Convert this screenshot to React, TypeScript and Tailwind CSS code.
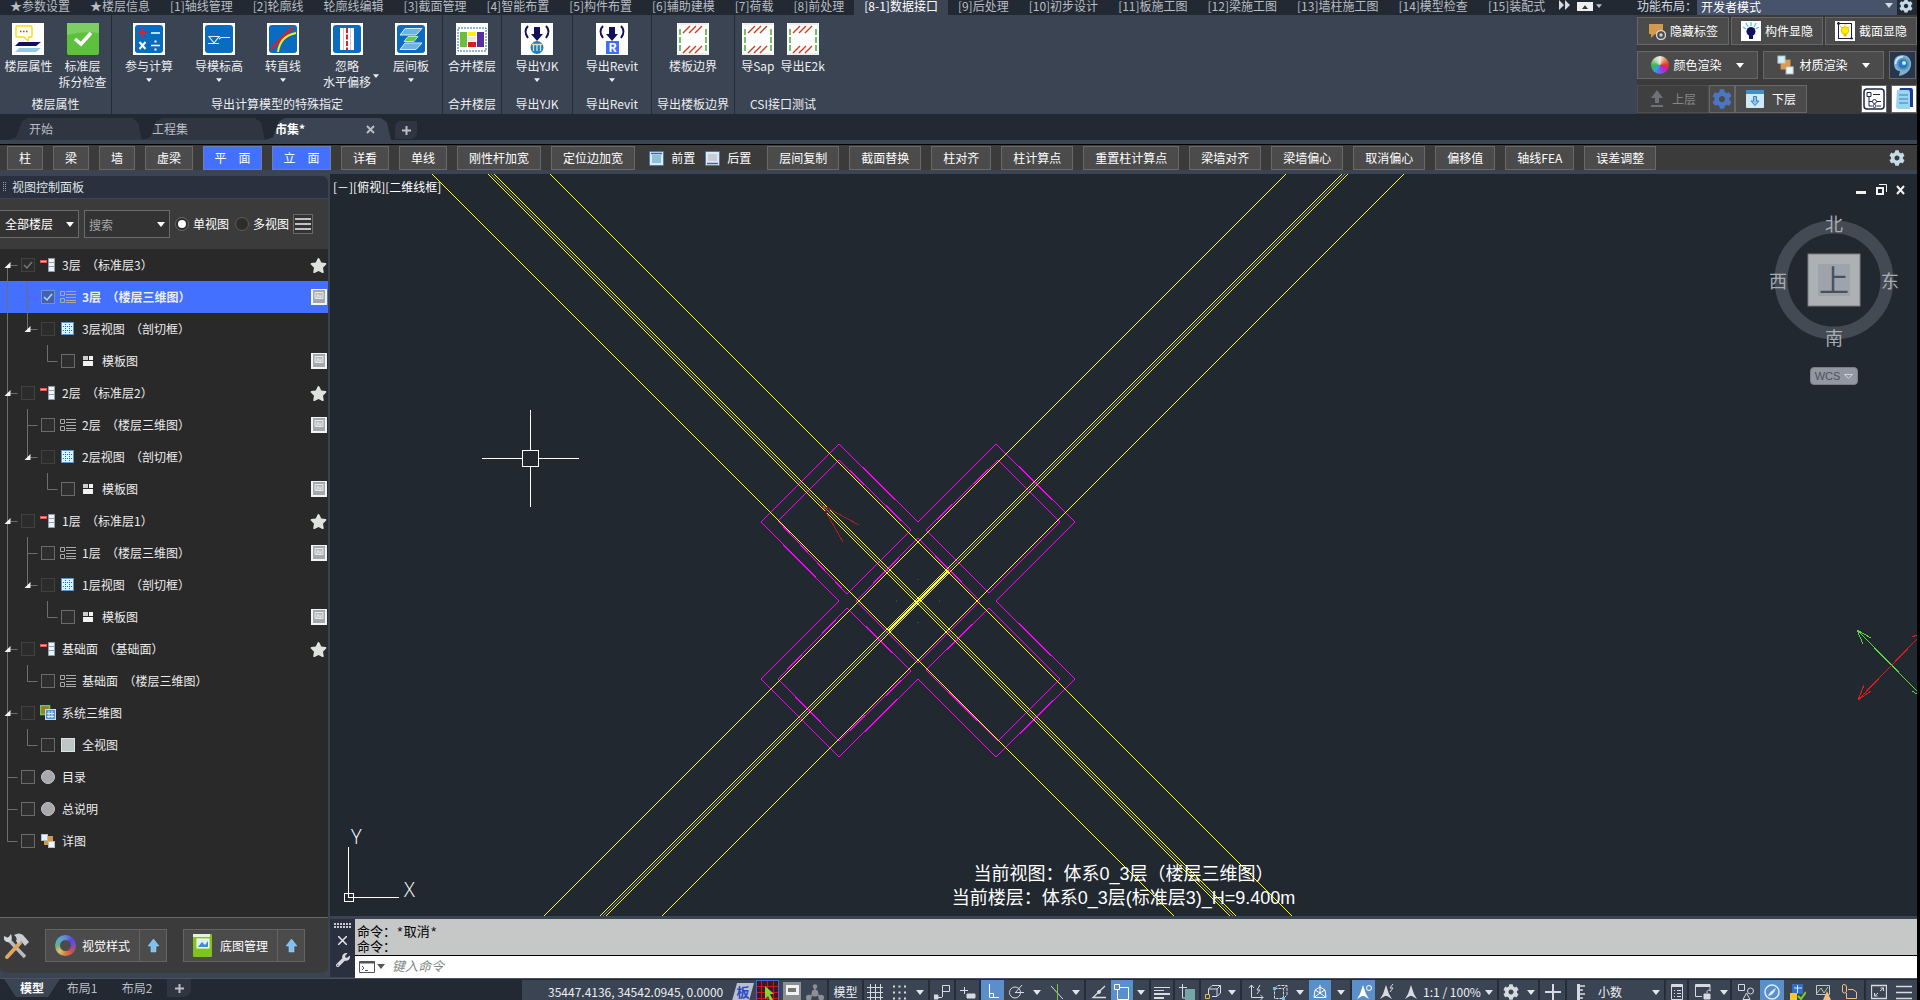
import React from 'react';
import { FaCog, FaStar, FaWrench } from 'react-icons/fa';
import clsx from 'clsx';

/* ---------- data ---------- */

const MENUS = [
  '★参数设置', '★楼层信息', '[1]轴线管理', '[2]轮廓线', '轮廓线编辑', '[3]截面管理', '[4]智能布置',
  '[5]构件布置', '[6]辅助建模', '[7]荷载', '[8]前处理', '[8-1]数据接口', '[9]后处理', '[10]初步设计',
  '[11]板施工图', '[12]梁施工图', '[13]墙柱施工图', '[14]模型检查', '[15]装配式',
];

const TOOLS_LEFT = ['柱', '梁', '墙', '虚梁', '平 面', '立 面', '详看', '单线', '刚性杆加宽', '定位边加宽'];
const TOOLS_RIGHT = [
  '层间复制', '截面替换', '柱对齐', '柱计算点', '重置柱计算点', '梁墙对齐', '梁墙偏心', '取消偏心',
  '偏移值', '轴线FEA', '误差调整',
];

type TreeIcon = 'floor' | 'list' | 'grid' | 'plan' | 'system' | 'square' | 'ball' | 'detail';
type Row = {
  level: 0 | 1 | 2;
  text: string;
  icon: TreeIcon;
  open?: boolean;
  dim?: boolean;
  checked?: boolean;
  selected?: boolean;
  last?: boolean;
  side?: 'star' | 'page';
};

const floorRows = (n: number, current = false): Row[] => [
  { level: 0, text: `${n}层  （标准层${n}）`, icon: 'floor', open: true, dim: true, checked: current, side: 'star' },
  { level: 1, text: `${n}层  （楼层三维图）`, icon: 'list', checked: current, selected: current, side: 'page' },
  { level: 1, text: `${n}层视图  （剖切框）`, icon: 'grid', open: true, dim: true, last: true },
  { level: 2, text: '模板图', icon: 'plan', last: true, side: 'page' },
];

const ROWS: Row[] = [
  ...floorRows(3, true),
  ...floorRows(2),
  ...floorRows(1),
  { level: 0, text: '基础面  （基础面）', icon: 'floor', open: true, dim: true, side: 'star' },
  { level: 1, text: '基础面  （楼层三维图）', icon: 'list', last: true },
  { level: 0, text: '系统三维图', icon: 'system', open: true, dim: true },
  { level: 1, text: '全视图', icon: 'square', last: true },
  { level: 0, text: '目录', icon: 'ball' },
  { level: 0, text: '总说明', icon: 'ball' },
  { level: 0, text: '详图', icon: 'detail', last: true },
];

/* ---------- small pieces ---------- */

const Caret = ({ className = '', small = false }: { className?: string; small?: boolean }) => (
  <svg viewBox="0 0 8 5" className={clsx('shrink-0 fill-current', small ? 'w-[6px] h-1' : 'w-2 h-[5px]', className)}>
    <path d="M0 0H8L4 5Z" />
  </svg>
);

const Icon16 = ({ children, size = 16 }: { children: React.ReactNode; size?: number }) => (
  <svg width={size} height={size} viewBox="0 0 16 16" fill="none" stroke="#d7dae0" className="shrink-0">
    {children}
  </svg>
);

/* ---------- ribbon icons, all 32 x 32 ---------- */

const R = ({ children }: { children: React.ReactNode }) => (
  <svg width="32" height="32" viewBox="0 0 32 32" fill="none" className="shrink-0">
    {children}
  </svg>
);

const BlueTile = ({ children }: { children: React.ReactNode }) => (
  <R>
    <rect width="32" height="32" fill="#fff" />
    <rect x="2" y="2" width="28" height="28" rx="3" fill="#0a6cc0" />
    {children}
  </R>
);

const IconFloorProp = () => (
  <R>
    <rect width="32" height="32" fill="#fff" />
    <path d="M4 3H19Q20 3 20 4V13Q20 14 19 14H17L16 18L12 14H5Q4 14 4 13V4Q4 3 5 3Z" stroke="#f5dd18" strokeWidth="1.4" fill="#fffef2" />
    <path d="M8 8.500H9.500M11 8.500H12.500M14 8.500H15.500" stroke="#a0522d" strokeWidth="1.6" />
    <path d="M7 19H29L24 23H3Z" fill="#10105c" />
    <path d="M7 25H29L24 29H3Z" fill="#8fcbe6" />
  </R>
);

const IconCheck = () => (
  <R>
    <rect width="32" height="32" rx="2" fill="#5dc13c" />
    <path d="M0 0H32V10Q16 8 0 12Z" fill="#7dcf61" />
    <path d="M8 16L14 21L24 10" stroke="#fff" strokeWidth="3.500" />
  </R>
);

const IconCalc = () => (
  <BlueTile>
    <path d="M5 10H14M9.500 5V14" stroke="#d8232a" strokeWidth="2" />
    <path d="M18 10H27M18 22.500H27" stroke="#fff" strokeWidth="1.600" />
    <path d="M6.500 19L12.500 26M12.500 19L6.500 26" stroke="#fff" strokeWidth="2" />
    <path d="M21.500 18.500H23.500M21.500 26.500H23.500" stroke="#fff" strokeWidth="2" />
  </BlueTile>
);

const IconLevel = () => (
  <BlueTile>
    <path d="M6 13.500H16L11 20Z M5 20.500H16 M16 16L18 14.500H27" stroke="#d5ecfb" strokeWidth="1.200" />
  </BlueTile>
);

const IconStraight = () => (
  <BlueTile>
    <path d="M4 26L26 4" stroke="#d8232a" strokeWidth="2.500" />
    <path d="M11 29Q13 13 29 10" stroke="#f4ee16" strokeWidth="2" />
  </BlueTile>
);

const IconIgnore = () => (
  <BlueTile>
    <rect x="9" y="5" width="14" height="22" fill="#fff" />
    <path d="M12.500 5V27M19.500 5V27" stroke="#c9c9c9" />
    <path d="M16 5V27" stroke="#d8232a" strokeWidth="2" strokeDasharray="5 1.500" />
  </BlueTile>
);

const IconInter = () => (
  <BlueTile>
    <path d="M10 5.500H27L21 12H5Z M10 20H27L21 26.500H5Z" fill="#6fb3e2" stroke="#d5ecfb" />
    <path d="M13 13.500H23L19 18.500H9Z" fill="#66c94a" stroke="#bfe7ad" />
  </BlueTile>
);

const IconMerge = () => (
  <R>
    <rect width="32" height="32" fill="#fff" />
    <rect x="2" y="5" width="28" height="23" stroke="#1d6fb8" strokeDasharray="2 1" />
    <rect x="4" y="9" width="7" height="15" fill="#6cbf3c" />
    <rect x="12" y="9" width="8" height="4" fill="#fff100" />
    <rect x="12" y="14" width="8" height="4" fill="#f1e7e2" />
    <rect x="12" y="19" width="8" height="5" fill="#d5201c" />
    <rect x="21" y="9" width="7" height="15" fill="#582f9f" />
  </R>
);

const ExportBase = () => (
  <>
    <rect width="32" height="32" fill="#fff" />
    <path d="M7 3Q2 8 7 15M25 3Q30 8 25 15" stroke="#10105c" strokeWidth="2" />
    <path d="M13 4H19V11H22L16 18L10 11H13Z" fill="#10105c" />
  </>
);

const IconYjk = () => (
  <R>
    <ExportBase />
    <circle cx="16" cy="24.500" r="6.500" fill="#1b7fc4" />
    <path d="M11 21.500H21M12.500 22V28M16 22V28M19.500 22V28" stroke="#e8dfae" strokeWidth="1.300" />
  </R>
);

const IconRevit = () => (
  <R>
    <ExportBase />
    <rect x="10" y="18" width="13" height="13" fill="#3f6dff" />
    <text x="16.500" y="29" textAnchor="middle" fill="#fff" className="text-[12px] font-bold">R</text>
  </R>
);

const IconSlab = () => (
  <R>
    <rect width="32" height="32" fill="#fff" />
    <path d="M1 1H31M1 31H31" stroke="#dcdcdc" />
    <path d="M6 10L13 3M12 10L19 3M18 10L25 3M6 30L13 23M12 30L19 23M18 30L25 23" stroke="#cc3a1c" strokeWidth="1.400" />
    <path d="M3 6V28M29 6V28" stroke="#55bb45" strokeWidth="1.700" strokeDasharray="6 2" />
  </R>
);

/* ---------- ribbon ---------- */

type RibbonItem = { lines: string[]; icon: React.ReactNode; drop?: boolean };
type RibbonGroup = { title: string; width: string; item: string; items: RibbonItem[] };

const GROUPS: RibbonGroup[] = [
  {
    title: '楼层属性', width: 'w-[112px]', item: 'px-[3px]',
    items: [
      { lines: ['楼层属性'], icon: <IconFloorProp /> },
      { lines: ['标准层', '拆分检查'], icon: <IconCheck /> },
    ],
  },
  {
    title: '导出计算模型的特殊指定', width: 'w-[331px]', item: 'px-[11px]',
    items: [
      { lines: ['参与计算'], icon: <IconCalc />, drop: true },
      { lines: ['导模标高'], icon: <IconLevel />, drop: true },
      { lines: ['转直线'], icon: <IconStraight />, drop: true },
      { lines: ['忽略', '水平偏移'], icon: <IconIgnore />, drop: true },
      { lines: ['层间板'], icon: <IconInter />, drop: true },
    ],
  },
  { title: '合并楼层', width: 'w-[59px]', item: 'px-1', items: [{ lines: ['合并楼层'], icon: <IconMerge /> }] },
  { title: '导出YJK', width: 'w-[71px]', item: 'px-1', items: [{ lines: ['导出YJK'], icon: <IconYjk />, drop: true }] },
  { title: '导出Revit', width: 'w-[79px]', item: 'px-1', items: [{ lines: ['导出Revit'], icon: <IconRevit />, drop: true }] },
  { title: '导出楼板边界', width: 'w-[83px]', item: 'px-1', items: [{ lines: ['楼板边界'], icon: <IconSlab /> }] },
  {
    title: 'CSI接口测试', width: 'w-[96px]', item: 'px-[3px]',
    items: [
      { lines: ['导Sap'], icon: <IconSlab /> },
      { lines: ['导出E2k'], icon: <IconSlab /> },
    ],
  },
];

const RibbonButton = ({ item, pad }: { item: RibbonItem; pad: string }) => (
  <button className={clsx('relative flex flex-col items-center shrink-0 h-[72px]', pad)}>
    {item.icon}
    <span className="mt-[3px] leading-4 whitespace-nowrap">{item.lines[0]}</span>
    {item.lines[1] && <span className="leading-4 whitespace-nowrap">{item.lines[1]}</span>}
    {item.drop && !item.lines[1] && <Caret small className="mt-1" />}
    {item.drop && item.lines[1] && <Caret small className="absolute right-[3px] top-[51px]" />}
  </button>
);

const Ribbon = () => (
  <div className="flex h-[99px] bg-[#3b4453] text-[#eceef1] overflow-hidden">
    {GROUPS.map((g, i) => (
      <section
        key={g.title}
        className={clsx('flex flex-col items-center shrink-0 pt-2', g.width, i < GROUPS.length - 1 && 'border-r border-[#252c36]')}
      >
        <div className="flex">
          {g.items.map(it => <RibbonButton key={it.lines[0]} item={it} pad={g.item} />)}
        </div>
        <h2 className="leading-4 mt-px whitespace-nowrap">{g.title}</h2>
      </section>
    ))}
    <div className="flex-1" />
    <SidePanel />
  </div>
);

const sideBtn = 'flex items-center justify-center gap-1 h-7 border border-[#676767] bg-[#4b4b4b] text-white whitespace-nowrap';

const SidePanel = () => (
  <div className="w-[280px] shrink-0 bg-[#3b3b3b] pt-[2px] flex flex-col gap-[6px]">
    <div className="flex gap-[2px]">
      <button className={clsx(sideBtn, 'flex-1')}>
        <svg width="18" height="18" viewBox="0 0 18 18" fill="none">
          <path d="M1 2H15V12H7L3 16V12H1Z" fill="#d29a4a" />
          <circle cx="13" cy="13" r="4.500" fill="#4b4b4b" stroke="#cfd3d8" strokeWidth="1.400" />
          <circle cx="13" cy="13" r="1.700" fill="#cfd3d8" />
        </svg>
        隐藏标签
      </button>
      <button className={clsx(sideBtn, 'flex-1')}>
        <svg width="20" height="20" viewBox="0 0 20 20">
          <rect width="20" height="20" fill="#fff" />
          <path d="M10 1V5M5 2L7 6M15 2L13 6M2 6L5 8M18 6L15 8" stroke="#5fc6ea" strokeWidth="1.300" />
          <circle cx="10" cy="10.500" r="4.500" fill="#10105c" />
          <rect x="8" y="14" width="4" height="4" fill="#10105c" />
        </svg>
        构件显隐
      </button>
      <button className={clsx(sideBtn, 'flex-1')}>
        <svg width="20" height="20" viewBox="0 0 20 20" fill="none">
          <rect width="20" height="20" fill="#fff" />
          <rect x="3.500" y="2.500" width="13" height="15" stroke="#1c1c4e" />
          <path d="M2 2.500H5M3.500 1V4M15 17.500H18" stroke="#1c1c4e" strokeWidth="1.500" />
          <path d="M5 5L7 7M15 5L13 7M10 3V5" stroke="#f0c419" />
          <circle cx="10" cy="9.500" r="3.700" fill="#fff100" stroke="#e9b90d" />
          <rect x="8.500" y="13" width="3" height="2.500" fill="#e9b90d" />
        </svg>
        截面显隐
      </button>
    </div>
    <div className="flex gap-[5px] pr-px">
      <button className={clsx(sideBtn, 'flex-1')}>
        <span className="size-[18px] rounded-full bg-[conic-gradient(#f4efe6,#e48a60,#e23232,#c71fc7,#7657ee,#2ca8d8,#3cb64c,#b7d8b0,#f4efe6)]" />
        <span>颜色渲染</span>
        <Caret className="ml-[10px]" />
      </button>
      <button className={clsx(sideBtn, 'flex-1')}>
        <svg width="18" height="22" viewBox="0 0 20 22">
          <rect x="4" y="5" width="11" height="11" fill="#dc9a4f" />
          <rect x="1" y="1" width="8" height="8" fill="#d9ecf2" stroke="#9cc3d0" />
          <rect x="10" y="13" width="8" height="8" fill="#eef5f8" stroke="#a5b7be" />
        </svg>
        <span>材质渲染</span>
        <Caret className="ml-[10px]" />
      </button>
      <button aria-label="渲染头像" className="flex items-center justify-center w-[27px] h-7 border border-[#676767] bg-[#26364d]">
        <svg width="23" height="24" viewBox="0 0 23 24" fill="none">
          <path d="M3 12Q2 2 12 2Q21 3 20 13Q18 21 8 23L9 18Q4 18 3 12Z" fill="#86aec8" />
          <path d="M5 11Q5 4 12 4" stroke="#d4e8f4" strokeWidth="2" />
          <circle cx="12" cy="11" r="5.500" fill="#2a78b4" stroke="#4f9cd0" strokeWidth="2" />
          <circle cx="13" cy="10" r="2" fill="#c9eafa" />
        </svg>
      </button>
    </div>
    <div className="flex">
      <button disabled className="flex items-center justify-center gap-2 w-[72px] h-7 border border-[#4e4e4e] bg-[#3f3f3f] text-[#858585]">
        <svg width="14" height="18" viewBox="0 0 14 18" fill="#6d727a">
          <path d="M7 0L13 8H9V13H5V8H1ZM1 15H13V17H1Z" />
        </svg>
        上层
      </button>
      <button aria-label="楼层设置" className="flex items-center justify-center w-[26px] h-7 border border-[#676767] bg-[#4b4b4b]">
        <FaCog className="size-5 text-[#4b77c2]" />
      </button>
      <button className={clsx(sideBtn, 'w-[72px] gap-2')}>
        <svg width="18" height="18" viewBox="0 0 18 18">
          <rect width="18" height="18" rx="1" fill="#cfe9f7" />
          <rect width="18" height="4" fill="#3e8fca" />
          <path d="M7.500 6.500H10.500V11H13L9 15.500L5 11H7.500Z" fill="#8cc4ea" stroke="#3a7fc0" />
        </svg>
        下层
      </button>
      <div className="flex-1" />
      <button aria-label="结构树" className="w-[26px] h-7 flex items-center justify-center bg-white border border-[#676767]">
        <svg width="24" height="24" viewBox="0 0 24 24" fill="none" stroke="#20264f">
          <rect x="2" y="2" width="20" height="20" rx="3" strokeWidth="1.500" />
          <path d="M5 5.500H9V9.500H5ZM7 10V19H10M7 14.500H10M11 7.500H18M15 14.500H19M15 19H19" />
          <circle cx="12.500" cy="14.500" r="2" />
          <circle cx="12.500" cy="19" r="1.500" />
        </svg>
      </button>
      <button aria-label="文档" className="w-[26px] h-7 ml-1 flex items-center justify-center bg-white border border-[#676767]">
        <svg width="22" height="24" viewBox="0 0 22 24">
          <path d="M7 1H18Q20 1 20 4V20H16V4H6Z" fill="#1b3d92" />
          <path d="M4 3H15Q17 3 17 6V22H6Q3 22 3 19Z" fill="#9bd4ef" />
          <path d="M6 8H15M6 12H15M6 16H15" stroke="#3d7fc0" />
        </svg>
      </button>
    </div>
  </div>
);

/* ---------- top bars ---------- */

const MenuBar = () => (
  <nav className="flex h-[15px] bg-[#222932] text-[#b9bdc4]">
    {MENUS.map(m => (
      <a
        key={m}
        href="#"
        className={clsx(
          'h-[15px] px-[10px] leading-3 whitespace-nowrap shrink-0',
          m.startsWith('[8-1]') && 'bg-[#3b4453] text-white',
        )}
      >
        {m}
      </a>
    ))}
    <svg width="12" height="10" viewBox="0 0 12 10" className="fill-[#d7dae0] ml-1 shrink-0">
      <path d="M0 0L5 5L0 10ZM6 0L11 5L6 10Z" />
    </svg>
    <span className="flex items-center justify-center w-4 h-[9px] mt-[2px] ml-[6px] bg-[#f0f0f0] text-[#333]">
      <Caret small className="rotate-180" />
    </span>
    <Caret small className="mt-1 ml-[3px]" />
    <div className="flex-1" />
    <label htmlFor="layout" className="leading-3 text-[#d7dae0] shrink-0">功能布局：</label>
    <div className="grid w-[200px] shrink-0 items-center">
      <select id="layout" className="col-start-1 row-start-1 appearance-none h-[15px] bg-[#47536a] text-white leading-[13px] pl-1 pb-[2px]">
        <option>开发者模式</option>
      </select>
      <Caret className="col-start-1 row-start-1 justify-self-end mr-1 mb-1 text-[#d7dae0]" />
    </div>
    <FaCog className="size-[14px] ml-[2px] mr-1 -mt-px text-[#c3d9e8] shrink-0" />
  </nav>
);

const tabShape = '[clip-path:polygon(0_100%,8px_88%,14px_15%,20px_0,calc(100%-10px)_0,calc(100%-4px)_20%,100%_100%)]';

const FileTabs = () => (
  <div className="flex items-end h-[26px] bg-[#222932] pl-2 text-[#b9bdc4]">
    <button className={clsx('w-[134px] h-[22px] pl-[21px] text-left bg-[#2f3642]', tabShape)}>开始</button>
    <button className={clsx('w-[123px] h-[22px] pl-[10px] text-left bg-[#2f3642]', tabShape)}>工程集</button>
    <button className={clsx('flex items-center w-[126px] h-[22px] pl-[10px] pr-4 bg-[#3b4453] text-white font-bold', tabShape)}>
      市集*
      <svg width="9" height="9" viewBox="0 0 9 9" stroke="#b9bdc4" strokeWidth="2" className="ml-auto">
        <path d="M1 1L8 8M8 1L1 8" />
      </svg>
    </button>
    <button aria-label="新建" className="flex items-center justify-center w-[22px] h-[18px] ml-1 mb-px rounded-tl-md rounded-br-md bg-[#2f3642]">
      <svg width="9" height="9" viewBox="0 0 9 9" stroke="#b9bdc4" strokeWidth="2">
        <path d="M4.500 0V9M0 4.500H9" />
      </svg>
    </button>
  </div>
);

const ToolButton = ({ label }: { label: string }) => (
  <button
    className={clsx(
      'h-6 border whitespace-pre text-white shrink-0',
      label.includes(' ') ? 'bg-[#4470ff] border-[#6f7fae] w-[59px]' : 'px-[11px] bg-[#4b4b4b] border-[#696969]',
    )}
  >
    {label.replace(' ', '\u3000')}
  </button>
);

const OrderIcon = ({ back = false }: { back?: boolean }) => (
  <svg width="15" height="15" viewBox="0 0 15 15">
    <rect width="15" height="15" rx="1" fill="#4e78b0" />
    <rect x="1" y="1" width="13" height="13" fill="#dfe9f5" />
    <rect x="3" y={back ? 3 : 4} width="9" height={back ? 7 : 8} fill={back ? '#c8ccd4' : '#8dc1d6'} />
    <path d={back ? 'M2 12.500H13' : 'M2 2.500H13'} stroke="#39689f" strokeWidth="1.500" />
  </svg>
);

const Toolbar = () => (
  <div className="flex items-end h-[26px] border-t border-black bg-[#3b3b3b] pl-[7px] gap-[10px]">
    {TOOLS_LEFT.map(t => <ToolButton key={t} label={t} />)}
    <div className="flex shrink-0 h-6 gap-[10px] pl-1 pr-[6px]">
      <button className="flex items-center gap-[7px] text-white"><OrderIcon />前置</button>
      <button className="flex items-center gap-[7px] text-white"><OrderIcon back />后置</button>
    </div>
    {TOOLS_RIGHT.map(t => <ToolButton key={t} label={t} />)}
    <button aria-label="设置" className="ml-auto mr-3 h-6 shrink-0">
      <FaCog className="size-4 text-[#c3dce6]" />
    </button>
  </div>
);

/* ---------- view tree ---------- */

const TreeGlyph = ({ icon }: { icon: TreeIcon }) => {
  switch (icon) {
    case 'floor':
      return (
        <Icon16>
          <path d="M0 4.500H7" stroke="#d9604c" strokeWidth="3" />
          <path d="M1 4.500H6" stroke="#f0b98a" />
          <path d="M8.500 1.500H14.500V14.500H8.500ZM8.500 5.500H14.500M8.500 9.500H14.500" fill="#eef4f7" stroke="#8ba0ac" />
        </Icon16>
      );
    case 'list':
      return (
        <Icon16>
          <path d="M.5 2.500H4.500V6.500H.5ZM.5 9.500H4.500V13.500H.5ZM6 2.500H16M6 5.500H16M6 8.500H16M6 11.500H16M6 13.500H16" stroke="#a9a9a9" />
        </Icon16>
      );
    case 'grid':
      return (
        <Icon16>
          <rect x="1.500" y="1.500" width="12" height="12" fill="#e3f0fa" stroke="#5b93cc" />
          <path d="M3 5.500H13M3 9.500H13M5.500 3V13M9.500 3V13" stroke="#2f66ae" strokeDasharray="1 1" />
        </Icon16>
      );
    case 'plan':
      return (
        <Icon16>
          <path d="M3 3H8V7H3Z" fill="#ccc" stroke="none" />
          <path d="M9 3H13V7H9ZM3 8H13V13H3Z" fill="#f2f2f2" stroke="none" />
        </Icon16>
      );
    case 'system':
      return (
        <Icon16>
          <rect x=".5" y="0.500" width="9" height="9" fill="#9a7a3e" stroke="#6fcf2f" strokeWidth="1.500" />
          <rect x="5.500" y="4.500" width="10" height="10" fill="#5b95cd" stroke="#c4dcf2" />
          <path d="M7 8.500H14M7 11.500H14M9 6V13M12 6V13" stroke="#dbeaf7" />
        </Icon16>
      );
    case 'square':
      return (
        <Icon16>
          <rect x="1.500" y="1.500" width="13" height="13" fill="#bcc7c6" stroke="#dde2e2" />
        </Icon16>
      );
    case 'ball':
      return (
        <Icon16>
          <circle cx="8" cy="8" r="6.500" fill="#a8a9ac" stroke="#c6c6c8" />
        </Icon16>
      );
    default:
      return (
        <Icon16>
          <rect x="4" y="3" width="9" height="9" fill="#db9440" stroke="none" />
          <rect x="1.500" y="1.500" width="6" height="6" fill="#e6f2f8" stroke="#a9c3cf" />
          <rect x="8.500" y="8.500" width="6" height="6" fill="#eef5f8" stroke="#a9c3cf" />
        </Icon16>
      );
  }
};

const PageBadge = () => (
  <svg width="16" height="16" viewBox="0 0 16 16" fill="none" className="shrink-0">
    <rect width="16" height="16" fill="#f4f4f4" />
    <rect x="2" y="1" width="12" height="13" fill="#a4a8ac" />
    <path d="M4 3.500H12V9.500H4Z" fill="#b9bcbf" stroke="#e6e8e9" />
    <path d="M6 9V6H8V8H10V6" stroke="#e6e8e9" />
  </svg>
);

// guide lines and the expander that stand left of a row's check box
const Guides = ({ row }: { row: Row }) => {
  const w = 21 + row.level * 20;
  const x = row.level * 20 + 7.5;
  const rootEnds = row.level === 0 && row.last;
  return (
    <svg width={w} height="32" viewBox={`0 0 ${w} 32`} fill="none" stroke="#6e6e6e" className="shrink-0">
      {row.level > 0 && <path d="M7.500 0V32" />}
      {row.level > 0 && <path d={`M${x} 0V${row.last ? 16.5 : 32}`} />}
      {row.level === 0 && <path d={`M7.500 ${row.text.startsWith('3层') ? 16 : 0}V${rootEnds ? 16.5 : 32}`} />}
      <path d={`M${x} 16.500H${x + 10}`} />
      {row.open && <path d={`M${x + 3} 13V19H${x - 3}Z`} fill="#f4f4f4" stroke="none" />}
    </svg>
  );
};

const TreeRow = ({ row }: { row: Row }) => (
  <li className={clsx('flex items-center h-8 pr-px', row.selected && 'bg-[#4470ff] font-bold')}>
    <Guides row={row} />
    <label className="flex items-center flex-1 whitespace-pre text-[#ececec]">
      <span className="grid shrink-0">
        <input
          type="checkbox"
          defaultChecked={row.checked}
          className={clsx(
            'col-start-1 row-start-1 appearance-none size-[14px] border',
            row.selected ? 'bg-[#4262b0] border-[#7b8fc8]' : row.dim ? 'border-[#414141] bg-[#2c2c2c]' : 'border-[#6b6b6b] bg-[#2e2e2e]',
          )}
        />
        {row.checked && (
          <svg viewBox="0 0 14 14" className="col-start-1 row-start-1 size-[14px] pointer-events-none" fill="none" stroke={row.selected ? '#b9d3ff' : '#777'} strokeWidth="1.500">
            <path d="M3 7L6 10L11 4" />
          </svg>
        )}
      </span>
      <span className="ml-[5px] mr-[6px]"><TreeGlyph icon={row.icon} /></span>
      {row.text}
    </label>
    {row.side === 'star' && <FaStar className="size-[17px] text-[#dfe3df]" />}
    {row.side === 'page' && <PageBadge />}
  </li>
);

const ArrowUpBlue = () => (
  <svg width="11" height="14" viewBox="0 0 11 14">
    <path d="M5.500 0L11 7H8V13H3V7H0Z" fill="#7fc0f0" stroke="#a9d8fa" strokeWidth=".5" />
  </svg>
);

const footBtn = 'flex items-center h-[33px] w-[122px] border border-[#646464] bg-[#4b4b4b] text-white';

const ViewPanel = () => (
  <aside className="flex flex-col w-[328px] shrink-0 mr-[2px] pt-[2px] pb-[5px]">
    <h2 className="flex items-center gap-[6px] h-[22px] mb-px pb-px pl-[3px] bg-[#2a303e] text-[#dfe2e6] rounded-tr-md">
      <svg width="3" height="10" viewBox="0 0 3 10" stroke="#9aa0ab" strokeDasharray="1 1">
        <path d="M.5 0V10M2.500 0V10" />
      </svg>
      视图控制面板
    </h2>
    <div className="flex items-center h-[50px] bg-[#3b3b3b] text-white">
      <div className="grid items-center w-[79px]">
        <select aria-label="楼层" className="col-start-1 row-start-1 appearance-none h-7 pl-[5px] border border-l-0 border-[#6a6a6a] bg-[#333]">
          <option>全部楼层</option>
        </select>
        <Caret className="col-start-1 row-start-1 justify-self-end mr-[5px] pointer-events-none" />
      </div>
      <div className="grid items-center w-[86px] ml-[5px]">
        <input aria-label="搜索" placeholder="搜索" className="col-start-1 row-start-1 min-w-0 w-full h-7 px-1 border border-[#6a6a6a] bg-[#333] placeholder:text-[#a6a6a6]" />
        <Caret className="col-start-1 row-start-1 justify-self-end mr-[5px]" />
      </div>
      <label className="flex items-center gap-[5px] ml-[6px]">
        <input type="radio" name="view" defaultChecked className="appearance-none size-3 rounded-full border-2 border-[#2c2c2c] bg-white outline outline-[#6a6a6a]" />
        单视图
      </label>
      <label className="flex items-center gap-[5px] ml-[7px]">
        <input type="radio" name="view" className="appearance-none size-3 rounded-full bg-[#2c2c2c] outline outline-[#5a5a5a]" />
        多视图
      </label>
      <button aria-label="菜单" className="flex items-center justify-center size-5 ml-1 border border-[#6a6a6a] bg-[#333]">
        <svg width="16" height="12" viewBox="0 0 16 12" stroke="#f2f2f2" strokeWidth="1.500">
          <path d="M0 1H16M0 6H16M0 11H16" />
        </svg>
      </button>
    </div>
    <ul className="flex-1 bg-[#292929] overflow-hidden">
      {ROWS.map((row, i) => <TreeRow key={i} row={row} />)}
    </ul>
    <div className="flex items-center h-14 border-t border-[#6a6a6a] bg-[#3b3b3b] rounded-b-md">
      <svg width="28" height="28" viewBox="0 0 28 28" fill="none" className="ml-[2px] mr-[15px] shrink-0">
        <path d="M5 6L23 25" stroke="#b9bcc0" strokeWidth="3.500" />
        <path d="M2 4Q1 11 8 10Q11 7 9 2L6 6Z" fill="#d4d6d9" />
        <path d="M18 11L5 25" stroke="#e0a463" strokeWidth="4" strokeLinecap="round" />
        <path d="M12 3Q17 0 21 3L27 10L23 14L19 9L16 12L14 9Q16 6 12 3Z" fill="#c9ccd0" />
      </svg>
      <div className={footBtn}>
        <button className="flex flex-1 items-center justify-center gap-[6px]">
          <span className="size-[21px] rounded-full bg-[conic-gradient(#6a86c8,#5a44e0,#7b4fc0,#c9524c,#df7a43,#dcc06a,#67b08c,#56a8d0,#6a86c8)] grid place-items-center">
            <span className="size-[11px] rounded-full bg-[#4b4b4b]" />
          </span>
          视觉样式
        </button>
        <button aria-label="展开视觉样式" className="flex items-center justify-center w-[27px] h-full border-l border-[#646464]">
          <ArrowUpBlue />
        </button>
      </div>
      <div className={clsx(footBtn, 'ml-4')}>
        <button className="flex flex-1 items-center justify-center gap-2">
          <svg width="19" height="23" viewBox="0 0 19 23">
            <rect width="19" height="23" rx="1" fill="#7fc41e" />
            <path d="M0 0H17V3H0Z" fill="#e8f2d8" />
            <rect x="4" y="5" width="12" height="9" fill="#dcefff" stroke="#fff" />
            <path d="M5 13L9 8L12 11L15 7V13Z" fill="#3c8cd2" />
          </svg>
          底图管理
        </button>
        <button aria-label="展开底图管理" className="flex items-center justify-center w-[27px] h-full border-l border-[#646464]">
          <ArrowUpBlue />
        </button>
      </div>
    </div>
  </aside>
);

/* ---------- drawing ---------- */

// diagonal runs: distance of each line from the axis through the joint at 918,601
const falling = (d: number) => `M${491 - d} 174L${1233 - d} 916`;
const rising = (d: number) => `M${1345 + d} 174L${603 + d} 916`;
const OFFSETS = [-59, -3, 3, 59];

const Drawing = () => (
  <svg viewBox="330 174 1587 742" preserveAspectRatio="xMidYMid slice" className="absolute inset-0 w-full h-full" fill="none" shapeRendering="crispEdges">
    <path stroke="#8a8a8a" d={falling(0) + rising(0)} />
    <path stroke="#f0f" d="M761 522L839 444L918 522L996 444L1075 522L996 601L1075 679L996 757L918 679L839 757L761 679L839 601Z" />
    <path
      stroke="#f0f"
      d="M778 521L839 460L911 530L847 594Z M998 460L1060 522L989 593L926 530Z M847 608L778 679L839 741L911 671Z M989 608L1060 679L998 741L926 670Z M918 538L980 601L918 663L856 601Z"
    />
    <path stroke="#ff0" d={OFFSETS.map(d => falling(d) + rising(d)).join('')} />
    <path stroke="#ff0" strokeWidth="2" d="M888 631L948 571" />
    <path stroke="#a52222" d="M822 505L859 525M822 505L843 542" />
    <path stroke="#3a4352" d="M917 579H919M917 622H919M896 600V602M939 600V602" />

    {/* cursor */}
    <path stroke="#fff" d="M482 458.500H522M538 458.500H579M530.500 410V450M530.500 466V507M522.500 450.500H538.500V466.500H522.500Z" />

    {/* ucs mark */}
    <path stroke="#fff" d="M348.500 847V897.500H399M344.500 893.500H353.500V901.500H344.500Z" />
    <g fill="#fff" className="font-['Open_Sans'] font-light text-[20px]">
      <text x="351" y="844">Y</text>
      <text x="404" y="897">X</text>
    </g>

    {/* axis arrows */}
    <path stroke="#5cd63c" d="M1857 630L1917 691M1857 630L1863 644M1857 630L1871 638M1912 691L1917 694" />
    <path stroke="#d81e1e" d="M1858 700L1917 639M1858 700L1864 685M1858 700L1871 691M1912 637L1917 635" />
  </svg>
);

const Compass = () => (
  <div className="absolute right-[18px] top-[36px] w-[130px] flex flex-col items-center">
    <svg width="130" height="140" viewBox="0 0 130 140" fill="none">
      <circle cx="65" cy="70" r="53" stroke="#434a54" strokeWidth="13" />
      <rect x="39" y="44" width="52" height="52" fill="#adb1b3" stroke="#7d7f80" />
      <rect x="49" y="54" width="32" height="32" fill="#9fa4ac" />
      <g textAnchor="middle" fill="#a9adb2" className="text-[18px]">
        <text x="65" y="21">北</text>
        <text x="9" y="78">西</text>
        <text x="121" y="78">东</text>
        <text x="65" y="135">南</text>
      </g>
      <text x="65" y="81" textAnchor="middle" fill="#49525c" className="text-[30px] font-['Liberation_Serif','Noto_Sans_CJK_SC',serif]">上</text>
    </svg>
    <button className="flex items-center justify-center gap-1 w-12 h-[18px] mt-[17px] rounded border border-[#7b8088] bg-[#9297a1] text-[#4d525b] text-[11px] font-['Liberation_Sans',sans-serif]">
      WCS
      <svg width="9" height="5" viewBox="0 0 9 5" fill="none" stroke="#d0d3d8"><path d="M.5 .5H8.500L4.500 4.500Z" /></svg>
    </button>
  </div>
);

const Viewport = () => (
  <div className="relative flex-1 min-h-0 bg-[#212830] overflow-hidden">
    <Drawing />
    <div className="absolute left-[3px] top-[5px] leading-4 text-white">[－][俯视][二维线框]</div>
    <div className="absolute right-3 top-[10px] flex items-center gap-[9px]">
      <button aria-label="最小化"><svg width="12" height="11" viewBox="0 0 12 11"><path d="M1 7H11V10H1Z" fill="#f2f2f2" /></svg></button>
      <button aria-label="还原">
        <svg width="11" height="11" viewBox="0 0 11 11" fill="none" stroke="#f2f2f2">
          <path d="M1 4H7V10H1Z" strokeWidth="2" /><path d="M3 .5H10.500V8" />
        </svg>
      </button>
      <button aria-label="关闭"><svg width="9" height="10" viewBox="0 0 9 10" stroke="#f2f2f2" strokeWidth="2"><path d="M1 1L8 9M8 1L1 9" /></svg></button>
    </div>
    <Compass />
    <div className="absolute inset-x-0 bottom-[6px] text-center text-white text-[18px] leading-6 whitespace-pre font-['Liberation_Sans','Noto_Sans_CJK_SC',sans-serif]">
      <p>当前视图：体系0_3层（楼层三维图）</p>
      <p>当前楼层：体系0_3层(标准层3)_H=9.400m</p>
    </div>
  </div>
);

const CommandLine = () => (
  <div className="flex h-[59px] mt-[3px] pb-px font-['Liberation_Mono','Noto_Sans_CJK_SC',monospace] text-[13px]">
    <div className="flex flex-col items-center gap-2 w-[25px] pt-1 bg-[#2a303e] text-[#d7dae0]">
      <svg width="17" height="5" viewBox="0 0 17 5" stroke="#c6cad1" strokeWidth="2" strokeDasharray="2 1">
        <path d="M0 1H17M0 4H17" />
      </svg>
      <button aria-label="关闭命令行">
        <svg width="9" height="9" viewBox="0 0 9 9" stroke="#e4e6ea" strokeWidth="1.500"><path d="M0 0L9 9M9 0L0 9" /></svg>
      </button>
      <button aria-label="自定义"><FaWrench className="size-[14px]" /></button>
    </div>
    <div className="flex flex-col flex-1 min-w-0 text-black">
      <div className="h-[38px] pl-[2px] pt-[6px] bg-[#c6c8c7] leading-[15px] border-b border-black">
        <p>命令：*取消*</p>
        <p>命令：</p>
      </div>
      <div className="flex items-center flex-1 bg-white pl-1 text-[#555]">
        <svg width="16" height="12" viewBox="0 0 16 12" fill="none" stroke="#555">
          <path d="M.5 .5H15.500V11.500H.5Z" /><path d="M0 1.500H16" strokeWidth="2" /><path d="M3 5L5 7L3 9M6 9.500H9" />
        </svg>
        <Caret className="ml-[2px]" />
        <input aria-label="命令" placeholder="键入命令" className="flex-1 ml-[7px] pt-[2px] bg-white italic outline-none placeholder:text-[#7d8a86]" />
      </div>
    </div>
  </div>
);

/* ---------- status bar ---------- */

const Drop = () => <Caret className="text-[#e3e5e9]" />;

// w: cell width, on: pressed, sep: dark rule at the right
type Cell = { w: string; el: React.ReactNode; on?: boolean; sep?: boolean; name?: string };

const CELLS: Cell[] = [
  { w: 'w-6', name: '板', el: (
    <svg width="22" height="18" viewBox="0 0 22 18"><path d="M5 0H22L17 18H0Z" fill="#b9bfd0" /><text x="11" y="14" textAnchor="middle" fill="#2d4ac0" className="text-[13px] font-bold">板</text></svg>
  ) },
  { w: 'w-[25px]', name: '选择', el: (
    <svg width="23" height="24" viewBox="0 0 23 24" fill="none">
      <rect x=".5" y=".5" width="22" height="23" fill="#361b26" stroke="#4663d8" />
      <path d="M1 6.500H22M1 12.500H22M1 18.500H22M5.500 1V23M11.500 1V23M17.500 1V23" stroke="#d01717" />
      <path d="M9 6L18 14H14L17 20L14 21L12 16L9 19Z" fill="#84d52d" />
    </svg>
  ) },
  { w: 'w-[23px]', name: '页面', el: (
    <svg width="18" height="20" viewBox="0 0 18 20"><rect width="18" height="20" fill="#8b8f93" /><rect x="3" y="3" width="13" height="10" fill="#f2f2f2" /><path d="M5 6H13V10H5Z" fill="#777" /></svg>
  ) },
  { w: 'w-[26px]', name: '支架', sep: true, el: (
    <Icon16 size={18}><path d="M8 2V9L2 13M8 9L14 13" stroke="#7c7f84" strokeWidth="2" /><circle cx="8" cy="3" r="2" fill="#8c8f94" stroke="none" /><circle cx="8" cy="9" r="3" fill="#8c8f94" stroke="none" /><circle cx="2.500" cy="13" r="2.500" fill="#8c8f94" stroke="none" /><circle cx="13.500" cy="13" r="2.500" fill="#8c8f94" stroke="none" /></Icon16>
  ) },
  { w: 'w-[35px]', sep: true, el: '模型' },
  { w: 'w-[22px]', name: '栅格', el: <Icon16><path d="M0 3.500H16M0 8.500H16M0 13.500H16M3.500 0V16M8.500 0V16M13.500 0V16" /></Icon16> },
  { w: 'w-[26px]', name: '捕捉', el: <Icon16><path d="M2 2.500H15M2 8.500H15M2 14.500H15" strokeWidth="2" strokeDasharray="2 3.500" /></Icon16> },
  { w: 'w-[18px]', sep: true, el: <Drop /> },
  { w: 'w-[26px]', name: '推断约束', sep: true, el: <Icon16><path d="M8.500 1.500H15.500V7.500H8.500ZM8.500 2V13M0 13.500H8" /><path d="M0 11H4V15H0Z" fill="#d7dae0" /></Icon16> },
  { w: 'w-[25px]', name: '动态输入', sep: true, el: <Icon16><path d="M0 6.500H8M4.500 3V10" /><path d="M7 10H15V14H7Z" fill="#d7dae0" /></Icon16> },
  { w: 'w-[23px]', name: '正交', on: true, el: <Icon16><path d="M4.500 0V13.500H14M4.500 9.500H8.500V13" stroke="#fff" /></Icon16> },
  { w: 'w-6', name: '极轴', el: <Icon16><circle cx="7" cy="8.500" r="5.500" /><path d="M7 9L14 1M7 8.500H16" /></Icon16> },
  { w: 'w-[18px]', el: <Drop /> },
  { w: 'w-[22px]', name: '等轴测', el: <Icon16><path d="M2 2L14 15" /><path d="M8.500 0V16" stroke="#7bc142" /></Icon16> },
  { w: 'w-[18px]', sep: true, el: <Drop /> },
  { w: 'w-[25px]', name: '追踪', el: <Icon16><path d="M14 2L2 13.500H15" strokeWidth="1.300" /><circle cx="8" cy="8" r="1.500" fill="#d7dae0" /></Icon16> },
  { w: 'w-[22px]', name: '对象捕捉', on: true, el: <Icon16><path d="M5 3.500H14.500V15.500H3.500V6" stroke="#fff" /><path d="M.5 .5H5.500V5.500H.5Z" stroke="#fff" /></Icon16> },
  { w: 'w-[18px]', sep: true, el: <Drop /> },
  { w: 'w-6', name: '线宽', sep: true, el: <Icon16><path d="M0 3.500H16M0 6.500H10" /><path d="M0 10H16M0 14H10" strokeWidth="2" /></Icon16> },
  { w: 'w-[26px]', name: '透明度', sep: true, el: <Icon16><path d="M0 3.500H8M3.500 0V14H7" /><path d="M6 5H16V16H6Z" fill="#76a5a8" stroke="none" /></Icon16> },
  { w: 'w-[23px]', name: '选择循环', el: <Icon16><path d="M3.500 10V5L7 1.500H15.500V9L12 12.500H7M3.500 5H12V12M12 5L15.500 1.500" /><path d="M.5 10.500H4.500V14.500H.5Z" stroke="#e8b277" /></Icon16> },
  { w: 'w-[18px]', sep: true, el: <Drop /> },
  { w: 'w-[27px]', name: '动态UCS', el: <Icon16><path d="M3.500 1V13.500H15M1 4L3.500 1L6 4M12.500 11L15 13.500L12.500 16" /><path d="M12 1L9 6H12L9 10" /></Icon16> },
  { w: 'w-[22px]', name: '选择过滤', el: <Icon16><path d="M2.500 4.500H11.500V14.500H2.500ZM2.500 4.500L6 1.500H15V11L11.500 14.500M11.500 4.500L15 1.500" strokeDasharray="3 1" /><path d="M1 3H4V6H1ZM10 13H13V16H10Z" fill="#6bbfe0" stroke="none" /></Icon16> },
  { w: 'w-[18px]', el: <Drop /> },
  { w: 'w-[22px]', name: '小控件', on: true, el: <Icon16><path d="M8 1V9L2 13.500M8 9L14 13.500M2 13.500L3 6L8 3L13 6L14 13.500ZM3 6L8 9L13 6" stroke="#fff" /></Icon16> },
  { w: 'w-[21px]', sep: true, el: <Drop /> },
  { w: 'w-[23px]', name: '注释可见性', on: true, el: <Icon16><path d="M7 1L4 10L1 15L6 12H8L13 15L10 10Z" fill="#fff" stroke="none" /><circle cx="13" cy="4" r="2.500" stroke="#fff" /></Icon16> },
  { w: 'w-6', name: '自动缩放', el: <Icon16><path d="M7 1L4 10L1 15L6 12H8L13 15L10 10Z" fill="#d7dae0" stroke="none" /><path d="M14 0L11 4H14L11 8" /></Icon16> },
  { w: 'w-6', name: '注释比例', el: <Icon16><path d="M8 1L5 10L2 15L7 12H9L14 15L11 10Z" fill="#d7dae0" stroke="none" /></Icon16> },
  { w: 'w-[58px]', el: '1:1 / 100%' },
  { w: 'w-[18px]', sep: true, el: <Drop /> },
  { w: 'w-6', name: '工作空间', el: <FaCog className="size-4 text-[#d7dae0]" /> },
  { w: 'w-[17px]', sep: true, el: <Drop /> },
  { w: 'w-[27px]', name: '注释监视器', sep: true, el: <Icon16><path d="M0 8H16M8 0V16" strokeWidth="2" /></Icon16> },
  { w: 'w-[25px]', name: '单位', el: <Icon16><path d="M5 0H8V16H5Z" fill="#d7dae0" stroke="none" /><path d="M8 2H13M8 6H11M8 10H13M8 14H11" strokeWidth="1.500" /></Icon16> },
  { w: 'w-[36px]', el: '小数' },
  { w: 'w-[38px] pl-5', sep: true, el: <Drop /> },
  { w: 'w-[23px]', name: '快捷特性', sep: true, el: <Icon16><path d="M2.500 .5H13.500V15.500H2.500Z" /><path d="M2 2H14" strokeWidth="2" /><path d="M5 6.500H6M8 6.500H12M5 9.500H6M8 9.500H12M5 12.500H6M8 12.500H12" /></Icon16> },
  { w: 'w-[28px]', name: '锁定界面', el: <Icon16><path d="M15 7V.5H.5V12.500H7" /><path d="M1 2H15" strokeWidth="2" /><path d="M9 10H15V15H9Z" fill="#d7dae0" /><path d="M12 9V7.500A2 2 0 0 1 15.500 7" /></Icon16> },
  { w: 'w-[15px]', sep: true, el: <Drop /> },
  { w: 'w-[28px]', name: '隔离对象', el: <Icon16><path d="M.5 .5H6.500V6.500H.5ZM5 15.500L8.500 9L12 15.500Z" /><circle cx="12.500" cy="7" r="3" /></Icon16> },
  { w: 'w-[24px]', name: '硬件加速', on: true, el: <Icon16><circle cx="8" cy="8" r="7" stroke="#d9ecff" strokeWidth="1.500" /><path d="M4 12Q5 8 12 4Q10 11 4 12Z" fill="#d9ecff" stroke="none" /></Icon16> },
  { w: 'w-[27px]', name: '插件', el: <Icon16><path d="M2 0H13V10H2Z" fill="#2d6fc4" stroke="none" /><path d="M0 9H7V16H0Z" fill="#ffc629" stroke="none" /><path d="M7.500 1V9M4 4H12" stroke="#d9ecff" /><path d="M8 12L11 15L16 8" stroke="#7ed321" strokeWidth="2" /></Icon16> },
  { w: 'w-[23px]', name: '图像', el: <Icon16><path d="M1.500 1.500H14.500V10.500H1.500Z" stroke="#c8c8c8" /><path d="M2 9L6 4L9 9L13 3" stroke="#a8d4a0" /><path d="M12 7L16 16H8Z" fill="#f0be85" stroke="none" /></Icon16> },
  { w: 'w-[32px]', name: '参照', sep: true, el: <Icon16><path d="M5.500 9V14.500H15.500V8L12 5.500H7" stroke="#f0be85" /><path d="M1.500 1.500Q1.500 .5 3 .5Q5.500 .5 5.500 3V7Q5.500 9 3.500 9Q1.500 9 1.500 7Z" stroke="#f0be85" /></Icon16> },
  { w: 'w-[25px]', name: '全屏', el: <Icon16><path d="M.5 1.500H15.500V14.500H.5Z" strokeWidth="1.300" /><path d="M9 7L12.500 4M9.500 4H12.500V7M7 9L3.500 12M3.500 9V12H6.500" /></Icon16> },
  { w: 'w-[26px]', name: '自定义', el: <Icon16><path d="M0 2.500H16M0 8.500H16M0 14.500H16" strokeWidth="1.500" /></Icon16> },
];

const StatusBar = () => (
  <footer className="flex h-[22px] border-t border-[#4a5262] bg-[#222932] overflow-hidden">
    <div className="flex flex-1 pl-1 text-[#b9bdc4]">
      <button className={clsx('w-[56px] h-[18px] bg-[#3b4453] text-white font-bold', '[clip-path:polygon(0_0,100%_0,44px_100%,12px_100%)]')}>模型</button>
      <button className="w-[44px] h-[18px]">布局1</button>
      <button className="w-[54px] h-[18px] pl-[12px]">布局2</button>
      <button aria-label="新建布局" className="flex items-center justify-center w-6 h-[18px] ml-[9px] rounded-br-lg bg-[#2f3642]">
        <svg width="9" height="9" viewBox="0 0 9 9" stroke="#b9bdc4" strokeWidth="2"><path d="M4.500 0V9M0 4.500H9" /></svg>
      </button>
    </div>
    <div className="flex shrink-0 h-6 mt-px bg-[#3b4453] text-[#eceef1]">
      <output className="w-[209px] pl-[26px] leading-6 whitespace-nowrap">35447.4136, 34542.0945, 0.0000</output>
      {CELLS.map((c, i) => (
        <button
          key={i}
          aria-label={c.name}
          className={clsx(
            'flex items-center justify-center shrink-0 h-6 whitespace-nowrap',
            c.w,
            c.on && 'bg-[#5b8fc9]',
            c.sep && 'border-r-2 border-[#262d37]',
          )}
        >
          {c.el}
        </button>
      ))}
    </div>
  </footer>
);

export default function App() {
  return (
    <div className="flex flex-col h-screen w-full overflow-hidden border-r-[3px] border-black bg-[#3b4453] text-[12px] font-['Noto_Sans_CJK_SC',sans-serif]">
      <MenuBar />
      <Ribbon />
      <FileTabs />
      <div className="h-1" />
      <Toolbar />
      <div className="h-1" />
      <main className="flex flex-1 min-h-0">
        <ViewPanel />
        <section className="flex flex-col flex-1 min-w-0">
          <Viewport />
          <CommandLine />
        </section>
      </main>
      <StatusBar />
    </div>
  );
}
